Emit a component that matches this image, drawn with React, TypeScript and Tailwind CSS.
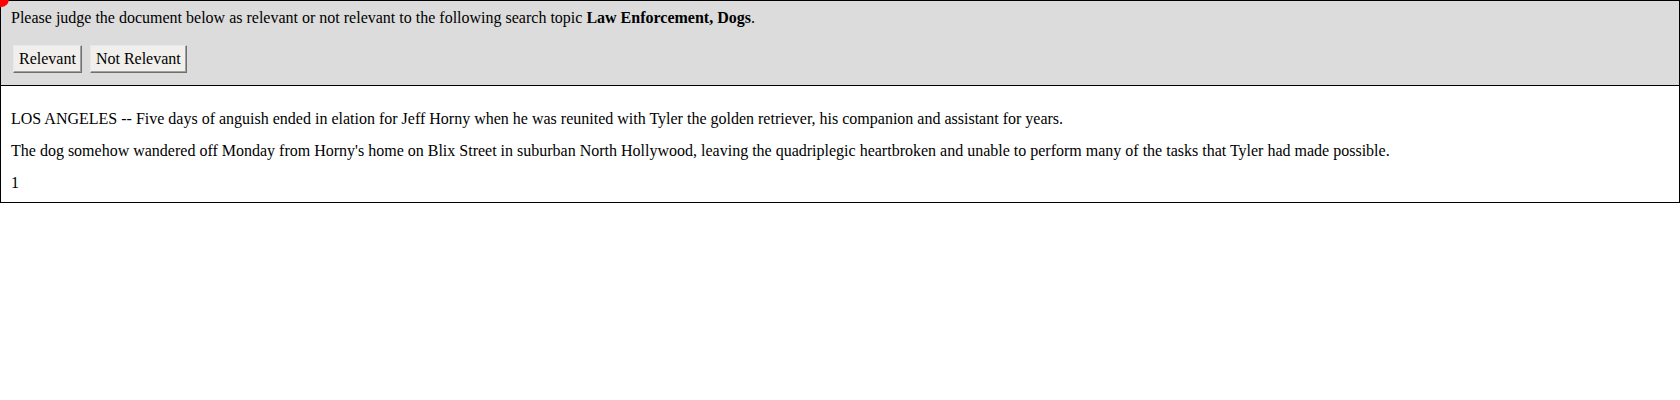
import React from 'react';

function JudgeHeader() {
  return (
    <div className="bg-[#dcdcdc] border border-black px-[10px] pt-[8px] pb-[12px]">
      <p className="leading-[18px]">
        Please judge the document below as relevant or not relevant to the following search topic{' '}
        <b>Law Enforcement, Dogs</b>.
      </p>
      <div className="flex gap-[8px] mt-[18px] ml-[2px]">
        <button className="h-[28px] px-[5px] bg-[#f1efeb] border border-t-[#e8e8e8] border-l-[#e8e8e8] border-r-[#6f6f6f] border-b-[#6f6f6f] shadow-[inset_-1px_-1px_0_#a0a0a0] leading-[18px]">
          Relevant
        </button>
        <button className="h-[28px] px-[5px] bg-[#f1efeb] border border-t-[#e8e8e8] border-l-[#e8e8e8] border-r-[#6f6f6f] border-b-[#6f6f6f] shadow-[inset_-1px_-1px_0_#a0a0a0] leading-[18px]">
          Not Relevant
        </button>
      </div>
    </div>
  );
}

export default function App() {
  return (
    <div className="relative text-[16px] text-black bg-white" style={{ fontFamily: '"Liberation Serif", "Times New Roman", serif' }}>
      <JudgeHeader />
      <div className="border border-t-0 border-black px-[10px] pt-[24px] pb-[10px] flex flex-col gap-[14px]">
        <p className="leading-[18px]">
          LOS ANGELES -- Five days of anguish ended in elation for Jeff Horny when he was reunited with Tyler the golden retriever, his companion and assistant for years.
        </p>
        <p className="leading-[18px]">
          The dog somehow wandered off Monday from Horny's home on Blix Street in suburban North Hollywood, leaving the quadriplegic heartbroken and unable to perform many of the tasks that Tyler had made possible.
        </p>
        <p className="leading-[18px]">1</p>
      </div>
      <div className="absolute -left-[7px] -top-[9px] w-[16px] h-[16px] rounded-full bg-[#ff0000]" />
    </div>
  );
}
